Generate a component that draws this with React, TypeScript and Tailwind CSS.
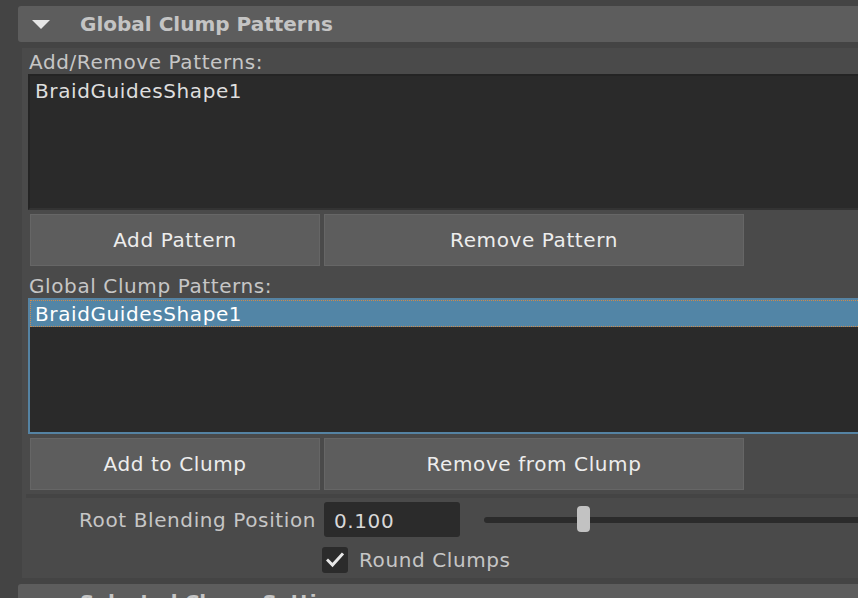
import React from 'react';

const FONT = { fontFamily: '"DejaVu Sans", Verdana, sans-serif' };

function Btn({ label, className }: { label: string; className: string }) {
  return (
    <button
      className={`h-[52px] bg-[#5d5d5d] border border-[#666666] text-[#ededed] text-[20px] tracking-[0.6px] flex items-center justify-center ${className}`}
    >
      {label}
    </button>
  );
}

function Header({ title }: { title: string }) {
  return (
    <div className="ml-[18px] h-[36px] bg-[#5d5d5d] rounded-[3px] flex items-center">
      <svg width="18" height="11" viewBox="0 0 18 11" className="ml-[14px]">
        <polygon points="0,1 18,1 9,10" fill="#e6e6e6" />
      </svg>
      <span className="ml-[30px] font-bold text-[20px] text-[#c4c4c4]">{title}</span>
    </div>
  );
}

export default function App() {
  return (
    <div className="w-[858px] h-[598px] overflow-hidden bg-[#444444]" style={FONT}>
      <div className="w-[940px] pt-[6px]">
        <Header title="Global Clump Patterns" />

        <div className="ml-[22px] mt-[6px] bg-[#4a4a4a] pb-[5px] text-[20px] tracking-[0.6px]">
          <div className="h-[26px] pl-[7px] leading-[28px] text-[#c6c6c6]">Add/Remove Patterns:</div>
          <div className="ml-[6px] h-[136px] bg-[#2a2a2a] border-t-2 border-l-2 border-[#242424] border-b-2 border-b-[#333333]">
            <div className="h-[26px] pl-[5px] leading-[30px] text-[#dedede]">BraidGuidesShape1</div>
          </div>
          <div className="flex gap-[4px] mt-[4px] ml-[8px]">
            <Btn label="Add Pattern" className="w-[290px]" />
            <Btn label="Remove Pattern" className="w-[420px]" />
          </div>
          <div className="h-[32px] pl-[7px] leading-[40px] text-[#c6c6c6]">Global Clump Patterns:</div>
          <div className="ml-[6px] h-[136px] bg-[#2a2a2a] border-2 border-r-0 border-[#5583a3]">
            <div className="h-[27px] bg-[#5285a6] border border-dotted border-[#d08a4a] pl-[4px] leading-[27px] text-white">
              BraidGuidesShape1
            </div>
          </div>
          <div className="flex gap-[4px] mt-[4px] ml-[8px]">
            <Btn label="Add to Clump" className="w-[290px]" />
            <Btn label="Remove from Clump" className="w-[420px]" />
          </div>
          <div className="ml-[4px] mt-[4px] h-[4px] bg-[#444444]" />

          <div className="flex items-center h-[35px] mt-[4px]">
            <div className="w-[294px] text-right text-[#c6c6c6]">Root Blending Position</div>
            <div className="ml-[8px] w-[136px] h-[35px] bg-[#2b2b2b] rounded-[3px] pl-[10px] leading-[39px] text-[#d8d8d8]">0.100</div>
            <div className="relative ml-[24px] flex-1 h-[35px] flex items-center">
              <div className="w-full h-[6px] rounded-full bg-[#2b2b2b]" />
              <div className="absolute left-[93px] top-[4px] w-[13px] h-[26px] rounded-[4px] bg-[#c2c2c2]" />
            </div>
          </div>

          <div className="flex items-center h-[26px] mt-[10px] ml-[300px]">
            <div className="w-[26px] h-[26px] rounded-[3px] bg-[#2b2b2b] flex items-center justify-center">
              <svg width="18" height="16" viewBox="0 0 18 16">
                <path d="M2 8.5 L6.5 13 L16 2.5" stroke="#e8e8e8" strokeWidth="3" fill="none" strokeLinecap="square" />
              </svg>
            </div>
            <span className="ml-[11px] leading-[30px] text-[#c6c6c6]">Round Clumps</span>
          </div>
        </div>

        <div className="mt-[6px]">
          <Header title="Selected Clump Settings" />
        </div>
      </div>
    </div>
  );
}
